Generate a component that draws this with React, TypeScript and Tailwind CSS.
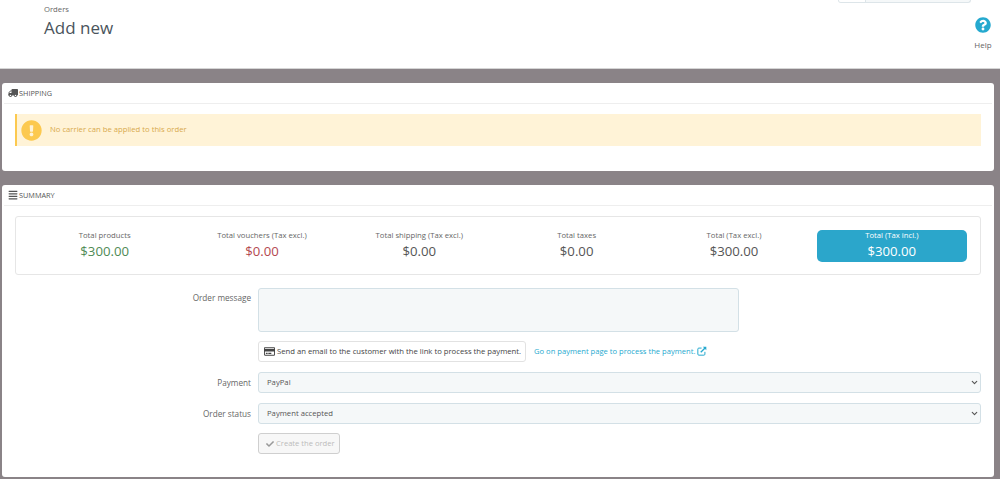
import { ChevronDown } from "lucide-react";
import { FaAlignJustify, FaCheck, FaExclamationCircle, FaQuestionCircle, FaRegCreditCard, FaTruck } from "react-icons/fa";

const totals = [
  { label: "Total products", value: "$300.00", color: "text-[#4f8a55]" },
  { label: "Total vouchers (Tax excl.)", value: "$0.00", color: "text-[#b4494f]" },
  { label: "Total shipping (Tax excl.)", value: "$0.00", color: "text-[#555]" },
  { label: "Total taxes", value: "$0.00", color: "text-[#555]" },
  { label: "Total (Tax excl.)", value: "$300.00", color: "text-[#555]" },
];

const SelectField = ({ value }: { value: string }) => (
  <div className="relative mt-[10px] h-[21px] w-[723px]">
    <select
      className="block h-full w-full appearance-none rounded-[3px] border border-[#d3e0e6] bg-[#f5f8f9] pl-[8px] text-[7.7px] text-[#555] outline-none"
      defaultValue={value}
    >
      <option>{value}</option>
    </select>
    <ChevronDown strokeWidth={3} className="absolute right-[2px] top-[6px] h-[9px] w-[9px] text-[#555]" />
  </div>
);

export default function App() {
  return (
    <main className="h-[479px] overflow-hidden bg-[#8a8387] font-['Open_Sans',sans-serif] text-[#555]">
      <header className="flex h-[69px] justify-between border-b border-[#d5d5d5] bg-white pl-[44px] pr-[6px]">
        <div className="pt-[4px]">
          <p className="text-[7.7px] leading-[11px] text-[#666]">Orders</p>
          <h1 className="mt-[1px] text-[17px] leading-[24px] text-[#4a545c]">Add new</h1>
        </div>
        <div className="flex gap-[1px]">
          <div className="flex h-[3px] w-[133px] overflow-hidden rounded-b-[3px] border border-t-0 border-[#dde5e9] bg-[#f5f8f9]">
            <div className="w-[27px] border-r border-[#dde5e9] bg-white" />
          </div>
          <div className="flex w-[22px] flex-col items-center pt-[17px]">
            <FaQuestionCircle className="h-[16px] w-[16px] text-[#25a9cf]" />
            <span className="mt-[6px] text-[8px] leading-[11px] text-[#666]">Help</span>
          </div>
        </div>
      </header>

      <section className="ml-[2px] mt-[14px] h-[88px] w-[992px] rounded-[3px] bg-white px-[13px]">
        <div className="-mx-[11px] flex h-[21px] items-center gap-[1px] border-b border-[#eee] pl-[4px] text-[7.3px] uppercase text-[#555]">
          <FaTruck className="h-[10px] w-[10px] -scale-x-100" />
          <span>Shipping</span>
        </div>
        <div className="mt-[10px] flex h-[32px] items-center gap-[8px] border-l-2 border-[#fcc94f] bg-[#fff3d7] pl-[4px] text-[7.7px] text-[#d8a94c]">
          <FaExclamationCircle className="h-[21px] w-[21px] text-[#fcc94f]" />
          <span>No carrier can be applied to this order</span>
        </div>
      </section>

      <section className="ml-[2px] mt-[14px] h-[292px] w-[992px] rounded-[3px] bg-white px-[13px]">
        <div className="-mx-[11px] flex h-[21px] items-center gap-[1px] border-b border-[#eee] pl-[4px] text-[7.3px] uppercase text-[#555]">
          <FaAlignJustify className="h-[10px] w-[10px]" />
          <span>Summary</span>
        </div>

        <div className="mt-[10px] grid h-[59px] w-[966px] grid-cols-6 rounded-[3px] border border-[#e6e6e6] px-[10px] py-[13px]">
          {totals.map((t) => (
            <div key={t.label} className="flex flex-col items-center">
              <span className="text-[7.7px] leading-[10px] text-[#666]">{t.label}</span>
              <span className={`text-[13.2px] leading-[22px] ${t.color}`}>{t.value}</span>
            </div>
          ))}
          <div className="ml-[4px] mr-[3px] flex flex-col items-center rounded-[5px] bg-[#2ba6cb] text-white">
            <span className="text-[7.7px] leading-[10px]">Total (Tax incl.)</span>
            <span className="text-[13.2px] leading-[22px]">$300.00</span>
          </div>
        </div>

        <div className="mt-[13px] grid grid-cols-[236px_723px] gap-x-[7px]">
          <label className="pt-[4px] text-right text-[8.2px] leading-[12px] text-[#666]">Order message</label>
          <textarea
            readOnly
            className="block h-[44px] w-[481px] resize-none rounded-[3px] border border-[#d3e0e6] bg-[#f5f8f9] outline-none"
          />

          <div />
          <div className="mt-[9px] flex h-[21px] items-center gap-[8px]">
            <button className="flex h-[21px] w-[268px] items-center gap-[2px] whitespace-nowrap rounded-[3px] border border-[#e2e2e2] bg-white pl-[5px] text-[7.7px] text-[#444]">
              <FaRegCreditCard className="h-[11px] w-[11px]" />
              Send an email to the customer with the link to process the payment.
            </button>
            <a className="flex items-center gap-[2px] whitespace-nowrap text-[7.6px] text-[#25a9cf]">
              Go on payment page to process the payment.
              <svg viewBox="0 0 12 12" className="h-[10px] w-[10px]" fill="none" stroke="currentColor" strokeWidth="1.2">
                <path d="M5.5 2.5H2.2A1.2 1.2 0 0 0 1 3.7v6.1A1.2 1.2 0 0 0 2.2 11h6.1a1.2 1.2 0 0 0 1.2-1.2V7" />
                <path d="M4.5 7.5 10 2" strokeWidth="1.6" />
                <path d="M7 .8h4.2V5z" fill="currentColor" stroke="none" />
              </svg>
            </a>
          </div>

          <label className="mt-[10px] self-center text-right text-[8.2px] leading-[12px] text-[#666]">Payment</label>
          <SelectField value="PayPal" />

          <label className="mt-[10px] self-center text-right text-[8.2px] leading-[12px] text-[#666]">Order status</label>
          <SelectField value="Payment accepted" />

          <div />
          <button
            disabled
            className="mt-[9px] flex h-[21px] w-[82px] items-center gap-[2px] whitespace-nowrap rounded-[3px] border border-[#cfcfcf] bg-[#f7f7f7] pl-[7px] text-[7.6px] text-[#bbb]"
          >
            <FaCheck className="h-[8px] w-[8px] text-[#999]" />
            Create the order
          </button>
        </div>
      </section>
    </main>
  );
}
